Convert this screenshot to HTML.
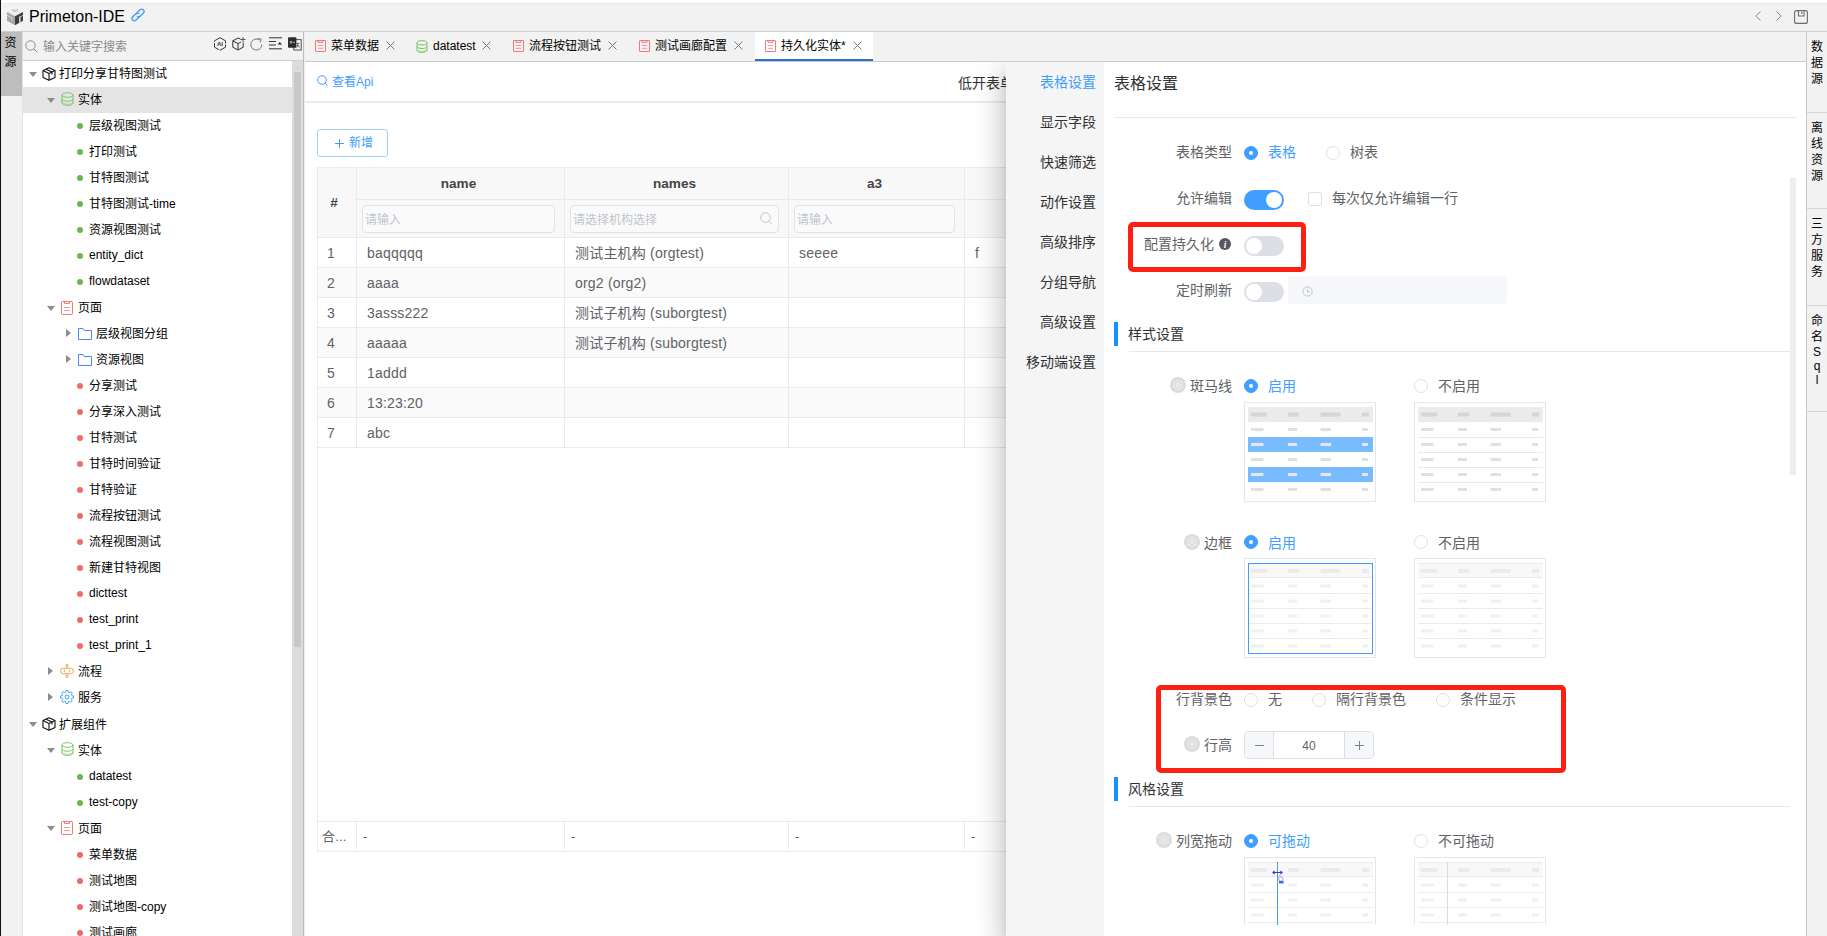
<!DOCTYPE html>
<html lang="zh-CN"><head><meta charset="utf-8"><title>Primeton-IDE</title>
<style>
*{box-sizing:border-box;margin:0;padding:0}
html,body{width:1827px;height:936px;overflow:hidden;background:#fff}
body{position:relative;font-family:"Liberation Sans", "Noto Sans CJK SC", sans-serif;font-size:12px;color:#000}
.abs{position:absolute}
svg{display:block;overflow:visible}
/* ---------- header ---------- */
#edge{left:0;top:0;width:1px;height:936px;background:#111}
#hdr{left:1px;top:3px;width:1826px;height:28px;background:#f2f2f2;border-top:1px solid #e9e9e9}
#hline{left:1px;top:31px;width:1826px;height:1px;background:#cdcdcd}
#title{left:29px;top:6px;font-size:16px;line-height:22px;color:#000;white-space:nowrap}
/* ---------- left strip ---------- */
#lstrip{left:1px;top:32px;width:22px;height:904px;background:#f2f2f2;border-right:1px solid #e2e2e2}
#ltab{left:1px;top:32px;width:21px;height:64px;background:#bdbdbd;font-size:12px;line-height:19px;text-align:center;padding-top:2px;padding-right:2px;color:#000}
/* ---------- search ---------- */
#search{left:23px;top:32px;width:280px;height:29px;background:#f2f2f2;border-bottom:1px solid #cfcfcf}
#search .ph{left:20px;top:7px;font-size:12px;line-height:16px;color:#8a8a8a}
/* ---------- tree ---------- */
#tree{left:23px;top:61px;width:269px;height:875px;background:#fff;overflow:hidden}
.row{position:absolute;left:0;width:269px;height:26px;line-height:26px;font-size:12px;white-space:nowrap;color:#000}
.row.sel{background:#e4e4e4}
.row .t{position:absolute;top:0}
.row svg{position:absolute}
.dot{position:absolute;width:6px;height:6px;border-radius:50%;top:10px}
#tscroll{left:292px;top:61px;width:11px;height:875px;background:#dcdcdc}
#tthumb{left:294px;top:72px;width:7px;height:575px;background:#c8c8c8}
#split{left:303px;top:32px;width:2px;height:904px;background:#bdbdbd;border-right:1px solid #ececec}
/* ---------- tabs ---------- */
#tabs{left:305px;top:32px;width:1501px;height:30px;background:#f2f2f2;border-bottom:1px solid #cbcbcb}
.tab{position:absolute;top:0;height:29px;font-size:12px;line-height:16px;white-space:nowrap}
.tab .tt{position:absolute;left:26px;top:5.500px}
.tab svg{position:absolute}
.tab.act{background:#fff;border-bottom:2px solid #2d6fce}
/* ---------- right strip ---------- */
#rstrip{left:1806px;top:32px;width:21px;height:904px;background:#f2f2f2;border-left:1px solid #c9c9c9}
.rs{position:absolute;left:0px;width:20px;text-align:center;font-size:12px;line-height:16px;color:#000}
.rsl{position:absolute;left:0;width:21px;height:1px;background:#d4d4d4}
/* ---------- main ---------- */
#main{left:305px;top:62px;width:1501px;height:874px;background:#fff;overflow:hidden}
#tb-line{left:0;top:39px;width:1501px;height:2px;background:#efebeb}
.lnk{color:#409eff;font-size:12px;line-height:16px;white-space:nowrap}
#addbtn{left:12px;top:67px;width:71px;height:28px;border:1px solid #a3d0fd;border-radius:3px;color:#409eff;font-size:12px;line-height:27px;background:#fff}
/* table */
.tbl{position:absolute;background:#fff}
.c{position:absolute;border-right:1px solid #e8eaec;border-bottom:1px solid #e8eaec;font-size:14px;letter-spacing:.2px;color:#606266;white-space:nowrap;overflow:hidden}
.c.h{background:#f8f8f9;color:#444;letter-spacing:0;font-weight:bold;text-align:center;font-size:13.600px;padding-right:4px}
.inp{position:absolute;height:28px;border:1px solid #e0e3ea;border-radius:4px;background:#fafafa;font-size:12px;line-height:28px;color:#c0c4cc;padding-left:2px;white-space:nowrap}
/* drawer */
#shadow{left:701px;top:0;width:800px;height:874px;background:#fff;box-shadow:0 8px 10px -5px rgba(0,0,0,.2),0 16px 24px 2px rgba(0,0,0,.14),0 6px 30px 5px rgba(0,0,0,.12)}
#menu{left:701px;top:0;width:98px;height:874px;background:#f5f5f5}
.mi{position:absolute;right:8px;font-size:14px;line-height:20px;color:#303133;white-space:nowrap}
#pane{left:799px;top:0;width:702px;height:874px;background:#fff;overflow:hidden}
.lbl{position:absolute;font-size:14px;line-height:20px;color:#606266;white-space:nowrap;text-align:right}
.txt{position:absolute;font-size:14px;line-height:20px;color:#606266;white-space:nowrap}
.blue{color:#409eff}
.radio{position:absolute;width:14px;height:14px;border-radius:50%;border:1px solid #dcdfe6;background:#fff}
.radio.on{border-color:#409eff;background:#409eff}
.radio.on:after{content:"";position:absolute;left:4px;top:4px;width:4px;height:4px;border-radius:50%;background:#fff}
.sw{position:absolute;width:40px;height:20px;border-radius:10px;background:#dcdfe6}
.sw:after{content:"";position:absolute;left:2px;top:2px;width:16px;height:16px;border-radius:50%;background:#fff}
.sw.on{background:#409eff}
.sw.on:after{left:22px}
.red{position:absolute;border:5px solid #fb2012;border-radius:5px}
.sec-bar{position:absolute;width:4px;height:24px;background:#1890ff}
.sec-t{position:absolute;font-size:14px;line-height:20px;color:#303133;white-space:nowrap}
.sec-l{position:absolute;height:1px;background:#e4e7ed}
.thumb{position:absolute;width:132px;height:100px;border:1px solid #e6e6e8;background:#fff}
.gear{position:absolute;width:16px;height:16px;border-radius:50%;background:#dcdcdc}
</style></head>
<body>
<div class="abs" id="hdr"></div><div class="abs" id="hline"></div>
<svg class="abs" style="left:7px;top:7.700px" width="16" height="17.300" viewBox="7 7.700 16 17.300"><path d="M15 7.700 L23 11.800 L15 16 L7 11.800 Z" fill="#ededed"/><path d="M7 11.800 L15 16 V25 L7 20.500 Z" fill="#a6a6a6"/><path d="M15 16 L23 11.800 V20.500 L15 25 Z" fill="#3d3d3d"/><path d="M12 9.300 L15 10.900 L18 9.300" fill="none" stroke="#9c9c9c" stroke-width=".8"/><path d="M7 15.400 L11.600 17.800 V20.200 L12.300 20.600 V17.300 L7 14.600 Z" fill="#e6e6e6"/><path d="M19 16.800 L20.500 16 V21.900 L19 22.700 Z" fill="#dadada"/><path d="M23 14.600 L19 16.700 V17.600 L23 15.500 Z" fill="#dadada"/></svg>
<div class="abs" id="title">Primeton-IDE</div>
<svg class="abs" style="left:130px;top:6.500px" width="16" height="16" viewBox="0 0 16 16" fill="none" stroke="#409eff" stroke-width="1.3" stroke-linecap="round"><g transform="rotate(-43 8 8)"><path d="M8.2 10.300 H2.900 A2.300 2.300 0 0 1 2.900 5.700 H7.300 A2.300 2.300 0 0 1 9.500 7.400"/><path d="M7.800 5.700 H13.100 A2.300 2.300 0 0 1 13.100 10.300 H8.700 A2.300 2.300 0 0 1 6.500 8.600"/></g></svg>
<svg class="abs" style="left:1755px;top:11px" width="6" height="10" viewBox="0 0 6 10" fill="none" stroke="#8a8a8a" stroke-width="1"><path d="M5.5 0.5 L0.8 5 L5.5 9.5"/></svg>
<svg class="abs" style="left:1776px;top:11px" width="6" height="10" viewBox="0 0 6 10" fill="none" stroke="#8a8a8a" stroke-width="1"><path d="M0.5 0.5 L5.2 5 L0.5 9.5"/></svg>
<svg class="abs" style="left:1794px;top:10px" width="14" height="14" viewBox="0 0 14 14" fill="none" stroke="#6b6b6b" stroke-width="1.1"><rect x="0.6" y="0.6" width="12.8" height="12.8" rx="2"/><path d="M4.5 0.6 V6 H10 V0.6"/><rect x="7" y="2.2" width="1.4" height="1.6" fill="#6b6b6b" stroke="none"/></svg>
<div class="abs" id="lstrip"></div><div class="abs" id="ltab">资<br>源</div>
<div class="abs" id="search">
<svg class="abs" style="left:2px;top:8px" width="13" height="13" viewBox="0 0 13 13" fill="none" stroke="#8c8c8c" stroke-width="1"><circle cx="5.5" cy="5.5" r="4.7"/><path d="M9 9 L12.5 12.5"/></svg>
<div class="abs ph">输入关键字搜索</div>
<svg class="abs" style="left:190px;top:5px" width="14" height="14" viewBox="0 0 14 14" fill="none" stroke="#333" stroke-width="1"><path d="M7 0.7 L12.5 3.8 V10.2 L7 13.3 L1.5 10.2 V3.8 Z" stroke-dasharray="9 1.2"/><text x="7" y="9.3" font-size="6" font-weight="bold" text-anchor="middle" fill="#333" stroke="none" font-family="Liberation Sans, sans-serif">AI</text></svg>
<svg class="abs" style="left:209px;top:5px" width="14" height="14" viewBox="0 0 14 14" fill="none" stroke="#333" stroke-width="1"><path d="M8.5 2 L6 1 L0.8 3.8 V10.2 L6 13 L11.2 10.2 V5.5"/><path d="M0.8 3.8 L6 6.6 L9 5 M6 6.6 V13"/><path d="M11 0 V5 M8.5 2.5 H13.5" stroke="#555"/></svg>
<svg class="abs" style="left:227px;top:6px" width="13" height="13" viewBox="0 0 13 13" fill="none" stroke="#777" stroke-width="1"><path d="M11.8 6.5 A5.5 5.5 0 1 1 9.3 1.9"/><path d="M7.5 0.6 L11.2 1 L10.2 4.4" /></svg>
<svg class="abs" style="left:246px;top:5px" width="14" height="13" viewBox="0 0 14 13" fill="none" stroke="#333" stroke-width="1"><path d="M0 0.8 H13 M0 4.5 H7 M0 8 H7 M0 11.8 H13"/><path d="M8.6 7.6 H13 L10.8 5 Z" fill="#222" stroke="none"/></svg>
<svg class="abs" style="left:265px;top:5px" width="14" height="14" viewBox="0 0 14 14" fill="none"><rect x="5.8" y="2.6" width="7.4" height="10.4" stroke="#555" stroke-width="1"/><rect x="0" y="0.2" width="8.4" height="10.6" rx="1" fill="#2b2b2b"/><path d="M1.6 5 H4.4 M3 4 V6.8 M5 5.4 H6.8" stroke="#ddd" stroke-width=".8"/><path d="M8.4 6.4 H11.4 M10 6.4 L9 10.4 M10 8 L11.4 10.4" stroke="#444" stroke-width=".8"/></svg>
</div>
<div class="abs" id="tree">
<div class="row" style="top:0px"><svg style="left:6px;top:11px" width="8" height="5" viewBox="0 0 8 5"><path d="M0 0 H8 L4 5 Z" fill="#8c8c8c"/></svg><svg style="left:19px;top:6px" width="14" height="14" viewBox="0 0 14 14" fill="none" stroke="#111" stroke-width="1.1" stroke-linejoin="round"><path d="M7 0.8 L13 3.6 V10.4 L7 13.2 L1 10.4 V3.6 Z"/><path d="M1 3.6 L7 6.4 L13 3.6 M7 6.4 V13.2 M4 2.2 L10 5 V7.4"/></svg><span class="t" style="left:36px;top:0px">打印分享甘特图测试</span></div>
<div class="row sel" style="top:26px"><svg style="left:24px;top:11px" width="8" height="5" viewBox="0 0 8 5"><path d="M0 0 H8 L4 5 Z" fill="#8c8c8c"/></svg><svg style="left:38px;top:5px" width="13" height="14" viewBox="0 0 13 14" fill="none" stroke="#7cc45f" stroke-width="1"><ellipse cx="6.5" cy="3" rx="5.5" ry="2.3"/><path d="M1 3 V11 C1 12.4 3.4 13.4 6.5 13.4 C9.6 13.4 12 12.4 12 11 V3"/><path d="M1 7 C1 8.3 3.4 9.2 6.5 9.2 C9.6 9.2 12 8.3 12 7"/><path d="M1 10 C1 11.3 3.4 12.2 6.5 12.2 C9.6 12.2 12 11.3 12 10" stroke-opacity=".6"/></svg><span class="t" style="left:55px;top:0px">实体</span></div>
<div class="row" style="top:52px"><span class="dot" style="left:54px;top:10px;background:#6cb650"></span><span class="t" style="left:66px;top:0px">层级视图测试</span></div>
<div class="row" style="top:78px"><span class="dot" style="left:54px;top:10px;background:#6cb650"></span><span class="t" style="left:66px;top:0px">打印测试</span></div>
<div class="row" style="top:104px"><span class="dot" style="left:54px;top:10px;background:#6cb650"></span><span class="t" style="left:66px;top:0px">甘特图测试</span></div>
<div class="row" style="top:130px"><span class="dot" style="left:54px;top:10px;background:#6cb650"></span><span class="t" style="left:66px;top:0px">甘特图测试-time</span></div>
<div class="row" style="top:156px"><span class="dot" style="left:54px;top:10px;background:#6cb650"></span><span class="t" style="left:66px;top:0px">资源视图测试</span></div>
<div class="row" style="top:182px"><span class="dot" style="left:54px;top:10px;background:#6cb650"></span><span class="t" style="left:66px;top:-1px">entity_dict</span></div>
<div class="row" style="top:208px"><span class="dot" style="left:54px;top:10px;background:#6cb650"></span><span class="t" style="left:66px;top:-1px">flowdataset</span></div>
<div class="row" style="top:234px"><svg style="left:24px;top:11px" width="8" height="5" viewBox="0 0 8 5"><path d="M0 0 H8 L4 5 Z" fill="#8c8c8c"/></svg><svg style="left:38px;top:5.5px" width="12" height="14" viewBox="0 0 12 14" fill="none" stroke="#f17878" stroke-width="1"><rect x="0.5" y="0.5" width="11" height="13" rx="0.8"/><path d="M3.5 0.5 V2.5 H8.5 V0.5"/><path d="M3 6.5 H9 M3 9.5 H9" stroke-opacity=".75"/></svg><span class="t" style="left:55px;top:0px">页面</span></div>
<div class="row" style="top:260px"><svg style="left:43px;top:8px" width="5" height="8" viewBox="0 0 5 8"><path d="M0 0 V8 L5 4 Z" fill="#8c8c8c"/></svg><svg style="left:55px;top:6.5px" width="14" height="12" viewBox="0 0 14 12" fill="none" stroke="#4a86f5" stroke-width="1"><path d="M0.5 11.5 V0.5 H5 L6.2 2.5 H13.5 V11.5 Z"/></svg><span class="t" style="left:73px;top:0px">层级视图分组</span></div>
<div class="row" style="top:286px"><svg style="left:43px;top:8px" width="5" height="8" viewBox="0 0 5 8"><path d="M0 0 V8 L5 4 Z" fill="#8c8c8c"/></svg><svg style="left:55px;top:6.5px" width="14" height="12" viewBox="0 0 14 12" fill="none" stroke="#4a86f5" stroke-width="1"><path d="M0.5 11.5 V0.5 H5 L6.2 2.5 H13.5 V11.5 Z"/></svg><span class="t" style="left:73px;top:0px">资源视图</span></div>
<div class="row" style="top:312px"><span class="dot" style="left:54px;top:10px;background:#f16a6a"></span><span class="t" style="left:66px;top:0px">分享测试</span></div>
<div class="row" style="top:338px"><span class="dot" style="left:54px;top:10px;background:#f16a6a"></span><span class="t" style="left:66px;top:0px">分享深入测试</span></div>
<div class="row" style="top:364px"><span class="dot" style="left:54px;top:10px;background:#f16a6a"></span><span class="t" style="left:66px;top:0px">甘特测试</span></div>
<div class="row" style="top:390px"><span class="dot" style="left:54px;top:10px;background:#f16a6a"></span><span class="t" style="left:66px;top:0px">甘特时间验证</span></div>
<div class="row" style="top:416px"><span class="dot" style="left:54px;top:10px;background:#f16a6a"></span><span class="t" style="left:66px;top:0px">甘特验证</span></div>
<div class="row" style="top:442px"><span class="dot" style="left:54px;top:10px;background:#f16a6a"></span><span class="t" style="left:66px;top:0px">流程按钮测试</span></div>
<div class="row" style="top:468px"><span class="dot" style="left:54px;top:10px;background:#f16a6a"></span><span class="t" style="left:66px;top:0px">流程视图测试</span></div>
<div class="row" style="top:494px"><span class="dot" style="left:54px;top:10px;background:#f16a6a"></span><span class="t" style="left:66px;top:0px">新建甘特视图</span></div>
<div class="row" style="top:520px"><span class="dot" style="left:54px;top:10px;background:#f16a6a"></span><span class="t" style="left:66px;top:-1px">dicttest</span></div>
<div class="row" style="top:546px"><span class="dot" style="left:54px;top:10px;background:#f16a6a"></span><span class="t" style="left:66px;top:-1px">test_print</span></div>
<div class="row" style="top:572px"><span class="dot" style="left:54px;top:10px;background:#f16a6a"></span><span class="t" style="left:66px;top:-1px">test_print_1</span></div>
<div class="row" style="top:598px"><svg style="left:25px;top:8px" width="5" height="8" viewBox="0 0 5 8"><path d="M0 0 V8 L5 4 Z" fill="#8c8c8c"/></svg><svg style="left:37px;top:5px" width="14" height="14" viewBox="0 0 14 14" fill="none" stroke="#e9a754" stroke-width="1"><rect x="0.6" y="4.2" width="12.8" height="5.600" rx="2.800"/><path d="M4.300 5.600 V8.400 M9.700 5.600 V8.400"/><ellipse cx="7" cy="1.500" rx="1.300" ry="1"/><ellipse cx="7" cy="12.500" rx="1.300" ry="1"/><path d="M7 2.500 V4.200 M7 9.800 V11.500"/></svg><span class="t" style="left:55px;top:0px">流程</span></div>
<div class="row" style="top:624px"><svg style="left:25px;top:8px" width="5" height="8" viewBox="0 0 5 8"><path d="M0 0 V8 L5 4 Z" fill="#8c8c8c"/></svg><svg style="left:37px;top:4.7px" width="14" height="14" viewBox="0 0 14 14" fill="none" stroke="#409eff" stroke-width="1" stroke-linejoin="round"><circle cx="7" cy="7" r="1.900"/><path d="M5.69 2.17 L5.97 0.48 L8.03 0.48 L8.31 2.17 L9.49 2.66 L10.88 1.66 L12.34 3.12 L11.34 4.51 L11.83 5.69 L13.52 5.97 L13.52 8.03 L11.83 8.31 L11.34 9.49 L12.34 10.88 L10.88 12.34 L9.49 11.34 L8.31 11.83 L8.03 13.52 L5.97 13.52 L5.69 11.83 L4.51 11.34 L3.12 12.34 L1.66 10.88 L2.66 9.49 L2.17 8.31 L0.48 8.03 L0.48 5.97 L2.17 5.69 L2.66 4.51 L1.66 3.12 L3.12 1.66 L4.51 2.66 Z"/></svg><span class="t" style="left:55px;top:0px">服务</span></div>
<div class="row" style="top:650px"><svg style="left:6px;top:11px" width="8" height="5" viewBox="0 0 8 5"><path d="M0 0 H8 L4 5 Z" fill="#8c8c8c"/></svg><svg style="left:19px;top:6px" width="14" height="14" viewBox="0 0 14 14" fill="none" stroke="#111" stroke-width="1.1" stroke-linejoin="round"><path d="M7 0.8 L13 3.6 V10.4 L7 13.2 L1 10.4 V3.6 Z"/><path d="M1 3.6 L7 6.4 L13 3.6 M7 6.4 V13.2 M4 2.2 L10 5 V7.4"/></svg><span class="t" style="left:36px;top:1px">扩展组件</span></div>
<div class="row" style="top:676px"><svg style="left:24px;top:11px" width="8" height="5" viewBox="0 0 8 5"><path d="M0 0 H8 L4 5 Z" fill="#8c8c8c"/></svg><svg style="left:38px;top:5px" width="13" height="14" viewBox="0 0 13 14" fill="none" stroke="#7cc45f" stroke-width="1"><ellipse cx="6.5" cy="3" rx="5.5" ry="2.3"/><path d="M1 3 V11 C1 12.4 3.4 13.4 6.5 13.4 C9.6 13.4 12 12.4 12 11 V3"/><path d="M1 7 C1 8.3 3.4 9.2 6.5 9.2 C9.6 9.2 12 8.3 12 7"/><path d="M1 10 C1 11.3 3.4 12.2 6.5 12.2 C9.6 12.2 12 11.3 12 10" stroke-opacity=".6"/></svg><span class="t" style="left:55px;top:1px">实体</span></div>
<div class="row" style="top:702px"><span class="dot" style="left:54px;top:11px;background:#6cb650"></span><span class="t" style="left:66px;top:0px">datatest</span></div>
<div class="row" style="top:728px"><span class="dot" style="left:54px;top:11px;background:#6cb650"></span><span class="t" style="left:66px;top:0px">test-copy</span></div>
<div class="row" style="top:754px"><svg style="left:24px;top:11px" width="8" height="5" viewBox="0 0 8 5"><path d="M0 0 H8 L4 5 Z" fill="#8c8c8c"/></svg><svg style="left:38px;top:5.5px" width="12" height="14" viewBox="0 0 12 14" fill="none" stroke="#f17878" stroke-width="1"><rect x="0.5" y="0.5" width="11" height="13" rx="0.8"/><path d="M3.5 0.5 V2.5 H8.5 V0.5"/><path d="M3 6.5 H9 M3 9.5 H9" stroke-opacity=".75"/></svg><span class="t" style="left:55px;top:1px">页面</span></div>
<div class="row" style="top:780px"><span class="dot" style="left:54px;top:11px;background:#f16a6a"></span><span class="t" style="left:66px;top:1px">菜单数据</span></div>
<div class="row" style="top:806px"><span class="dot" style="left:54px;top:11px;background:#f16a6a"></span><span class="t" style="left:66px;top:1px">测试地图</span></div>
<div class="row" style="top:832px"><span class="dot" style="left:54px;top:11px;background:#f16a6a"></span><span class="t" style="left:66px;top:1px">测试地图-copy</span></div>
<div class="row" style="top:858px"><span class="dot" style="left:54px;top:11px;background:#f16a6a"></span><span class="t" style="left:66px;top:1px">测试画廊</span></div>
</div>
<div class="abs" id="tscroll"></div><div class="abs" id="tthumb"></div>
<svg class="abs" style="left:294px;top:65px" width="7" height="4" viewBox="0 0 7 4"><path d="M0 4 H7 L3.5 0 Z" fill="#d6d6d6"/></svg>
<div class="abs" id="split"></div>
<div class="abs" id="tabs">
<div class="tab" style="left:0px;width:101px"><svg style="left:10px;top:8px" width="11" height="12" viewBox="0 0 11 12" fill="none" stroke="#f17878" stroke-width="1"><rect x="0.5" y="0.5" width="10" height="11" rx="0.5"/><path d="M3 0.5 V2.300 H8 V0.5"/><path d="M2.800 5.500 H8.200 M2.800 8.300 H8.200" stroke-opacity=".7"/></svg><span class="tt">菜单数据</span><svg style="left:81px;top:9px" width="9" height="9" viewBox="0 0 9 9" stroke="#777" stroke-width="1" fill="none"><path d="M0.5 0.5 L8.5 8.5 M8.5 0.5 L0.5 8.5"/></svg></div>
<div class="tab" style="left:102px;width:95px"><svg style="left:9px;top:8px" width="12" height="13" viewBox="0 0 12 13" fill="none" stroke="#7cc45f" stroke-width="1"><ellipse cx="6" cy="2.800" rx="5" ry="2.100"/><path d="M1 2.800 V10.200 C1 11.500 3.200 12.400 6 12.400 C8.800 12.400 11 11.500 11 10.200 V2.800"/><path d="M1 6.400 C1 7.600 3.200 8.500 6 8.500 C8.800 8.500 11 7.600 11 6.400"/><path d="M1 9.200 C1 10.400 3.200 11.300 6 11.300 C8.800 11.300 11 10.400 11 9.200" stroke-opacity=".6"/></svg><span class="tt">datatest</span><svg style="left:75px;top:9px" width="9" height="9" viewBox="0 0 9 9" stroke="#777" stroke-width="1" fill="none"><path d="M0.5 0.5 L8.5 8.5 M8.5 0.5 L0.5 8.5"/></svg></div>
<div class="tab" style="left:198px;width:125px"><svg style="left:10px;top:8px" width="11" height="12" viewBox="0 0 11 12" fill="none" stroke="#f17878" stroke-width="1"><rect x="0.5" y="0.5" width="10" height="11" rx="0.5"/><path d="M3 0.5 V2.300 H8 V0.5"/><path d="M2.800 5.500 H8.200 M2.800 8.300 H8.200" stroke-opacity=".7"/></svg><span class="tt">流程按钮测试</span><svg style="left:105px;top:9px" width="9" height="9" viewBox="0 0 9 9" stroke="#777" stroke-width="1" fill="none"><path d="M0.5 0.5 L8.5 8.5 M8.5 0.5 L0.5 8.5"/></svg></div>
<div class="tab" style="left:324px;width:125px"><svg style="left:10px;top:8px" width="11" height="12" viewBox="0 0 11 12" fill="none" stroke="#f17878" stroke-width="1"><rect x="0.5" y="0.5" width="10" height="11" rx="0.5"/><path d="M3 0.5 V2.300 H8 V0.5"/><path d="M2.800 5.500 H8.200 M2.800 8.300 H8.200" stroke-opacity=".7"/></svg><span class="tt">测试画廊配置</span><svg style="left:105px;top:9px" width="9" height="9" viewBox="0 0 9 9" stroke="#777" stroke-width="1" fill="none"><path d="M0.5 0.5 L8.5 8.5 M8.5 0.5 L0.5 8.5"/></svg></div>
<div class="tab act" style="left:450px;width:118px"><svg style="left:10px;top:8px" width="11" height="12" viewBox="0 0 11 12" fill="none" stroke="#f17878" stroke-width="1"><rect x="0.5" y="0.5" width="10" height="11" rx="0.5"/><path d="M3 0.5 V2.300 H8 V0.5"/><path d="M2.800 5.500 H8.200 M2.800 8.300 H8.200" stroke-opacity=".7"/></svg><span class="tt">持久化实体*</span><svg style="left:98px;top:9px" width="9" height="9" viewBox="0 0 9 9" stroke="#777" stroke-width="1" fill="none"><path d="M0.5 0.5 L8.5 8.5 M8.5 0.5 L0.5 8.5"/></svg></div>
</div>
<div class="abs" id="rstrip">
<div class="rs" style="top:7px;height:16px;line-height:16px">数</div><div class="rs" style="top:23px;height:16px;line-height:16px">据</div><div class="rs" style="top:39px;height:16px;line-height:16px">源</div>
<div class="rsl" style="top:80px"></div>
<div class="rs" style="top:88px;height:16px;line-height:16px">离</div><div class="rs" style="top:104px;height:16px;line-height:16px">线</div><div class="rs" style="top:120px;height:16px;line-height:16px">资</div><div class="rs" style="top:136px;height:16px;line-height:16px">源</div>
<div class="rsl" style="top:176px"></div>
<div class="rs" style="top:184px;height:16px;line-height:16px">三</div><div class="rs" style="top:200px;height:16px;line-height:16px">方</div><div class="rs" style="top:216px;height:16px;line-height:16px">服</div><div class="rs" style="top:232px;height:16px;line-height:16px">务</div>
<div class="rsl" style="top:273px"></div>
<div class="rs" style="top:281px;height:16px;line-height:16px">命</div><div class="rs" style="top:297px;height:16px;line-height:16px">名</div><div class="rs" style="top:313px;height:14px;line-height:14px">S</div><div class="rs" style="top:327px;height:14px;line-height:14px">q</div><div class="rs" style="top:341px;height:14px;line-height:14px">l</div>
<div class="rsl" style="top:379px"></div>
</div>
<div class="abs" id="main">
<svg class="abs" style="left:12px;top:13px" width="11" height="11" viewBox="0 0 11 11" fill="none" stroke="#409eff" stroke-width="1"><circle cx="5" cy="5" r="4.3"/><path d="M8 8 L10.5 10.5"/></svg>
<div class="abs lnk" style="left:27px;top:12px">查看Api</div>
<div class="abs" style="left:653px;top:11px;font-size:14px;line-height:20px;color:#333;white-space:nowrap">低开表单</div>
<div class="abs" id="tb-line"></div>
<div class="abs" id="addbtn"><svg style="position:absolute;left:17px;top:8.500px" width="9" height="9" viewBox="0 0 9 9" stroke="#409eff" stroke-width="1" fill="none"><path d="M4.500 0 V9 M0 4.500 H9"/></svg><span style="position:absolute;left:31px;top:0">新增</span></div>
<div class="abs" style="left:12px;top:105px;width:720px;height:685px;border-left:1px solid #e8eaec;border-top:1px solid #e8eaec"></div>
<div class="c h" style="left:13px;top:106px;width:39px;height:70px;line-height:69px;padding-right:6px">#</div>
<div class="c h" style="left:52px;top:106px;width:208px;height:32px;line-height:31px">name</div>
<div class="c h" style="left:52px;top:138px;width:208px;height:38px"></div>
<div class="c h" style="left:260px;top:106px;width:224px;height:32px;line-height:31px">names</div>
<div class="c h" style="left:260px;top:138px;width:224px;height:38px"></div>
<div class="c h" style="left:484px;top:106px;width:176px;height:32px;line-height:31px">a3</div>
<div class="c h" style="left:484px;top:138px;width:176px;height:38px"></div>
<div class="c h" style="left:660px;top:106px;width:200px;height:32px;line-height:31px"></div>
<div class="c h" style="left:660px;top:138px;width:200px;height:38px"></div>
<div class="inp" style="left:57px;top:143px;width:193px">请输入</div>
<div class="inp" style="left:265px;top:143px;width:209px">请选择机构选择</div>
<svg class="abs" style="left:455px;top:150px" width="13" height="13" viewBox="0 0 13 13" fill="none" stroke="#c0c4cc" stroke-width="1"><circle cx="5.5" cy="5.5" r="4.8"/><path d="M9 9 L12 12"/></svg>
<div class="inp" style="left:489px;top:143px;width:161px">请输入</div>
<div class="c" style="left:13px;top:176px;width:39px;height:30px;line-height:31px;padding-left:9px;background:#fff">1</div>
<div class="c" style="left:52px;top:176px;width:208px;height:30px;line-height:31px;padding-left:10px;background:#fff">baqqqqq</div>
<div class="c" style="left:260px;top:176px;width:224px;height:30px;line-height:31px;padding-left:10px;background:#fff">测试主机构 (orgtest)</div>
<div class="c" style="left:484px;top:176px;width:176px;height:30px;line-height:31px;padding-left:10px;background:#fff">seeee</div>
<div class="c" style="left:660px;top:176px;width:200px;height:30px;line-height:31px;padding-left:10px;background:#fff">f</div>
<div class="c" style="left:13px;top:206px;width:39px;height:30px;line-height:31px;padding-left:9px;background:#fafafa">2</div>
<div class="c" style="left:52px;top:206px;width:208px;height:30px;line-height:31px;padding-left:10px;background:#fafafa">aaaa</div>
<div class="c" style="left:260px;top:206px;width:224px;height:30px;line-height:31px;padding-left:10px;background:#fafafa">org2 (org2)</div>
<div class="c" style="left:484px;top:206px;width:176px;height:30px;line-height:31px;padding-left:10px;background:#fafafa"></div>
<div class="c" style="left:660px;top:206px;width:200px;height:30px;line-height:31px;padding-left:10px;background:#fafafa"></div>
<div class="c" style="left:13px;top:236px;width:39px;height:30px;line-height:31px;padding-left:9px;background:#fff">3</div>
<div class="c" style="left:52px;top:236px;width:208px;height:30px;line-height:31px;padding-left:10px;background:#fff">3asss222</div>
<div class="c" style="left:260px;top:236px;width:224px;height:30px;line-height:31px;padding-left:10px;background:#fff">测试子机构 (suborgtest)</div>
<div class="c" style="left:484px;top:236px;width:176px;height:30px;line-height:31px;padding-left:10px;background:#fff"></div>
<div class="c" style="left:660px;top:236px;width:200px;height:30px;line-height:31px;padding-left:10px;background:#fff"></div>
<div class="c" style="left:13px;top:266px;width:39px;height:30px;line-height:31px;padding-left:9px;background:#fafafa">4</div>
<div class="c" style="left:52px;top:266px;width:208px;height:30px;line-height:31px;padding-left:10px;background:#fafafa">aaaaa</div>
<div class="c" style="left:260px;top:266px;width:224px;height:30px;line-height:31px;padding-left:10px;background:#fafafa">测试子机构 (suborgtest)</div>
<div class="c" style="left:484px;top:266px;width:176px;height:30px;line-height:31px;padding-left:10px;background:#fafafa"></div>
<div class="c" style="left:660px;top:266px;width:200px;height:30px;line-height:31px;padding-left:10px;background:#fafafa"></div>
<div class="c" style="left:13px;top:296px;width:39px;height:30px;line-height:31px;padding-left:9px;background:#fff">5</div>
<div class="c" style="left:52px;top:296px;width:208px;height:30px;line-height:31px;padding-left:10px;background:#fff">1addd</div>
<div class="c" style="left:260px;top:296px;width:224px;height:30px;line-height:31px;padding-left:10px;background:#fff"></div>
<div class="c" style="left:484px;top:296px;width:176px;height:30px;line-height:31px;padding-left:10px;background:#fff"></div>
<div class="c" style="left:660px;top:296px;width:200px;height:30px;line-height:31px;padding-left:10px;background:#fff"></div>
<div class="c" style="left:13px;top:326px;width:39px;height:30px;line-height:31px;padding-left:9px;background:#fafafa">6</div>
<div class="c" style="left:52px;top:326px;width:208px;height:30px;line-height:31px;padding-left:10px;background:#fafafa">13:23:20</div>
<div class="c" style="left:260px;top:326px;width:224px;height:30px;line-height:31px;padding-left:10px;background:#fafafa"></div>
<div class="c" style="left:484px;top:326px;width:176px;height:30px;line-height:31px;padding-left:10px;background:#fafafa"></div>
<div class="c" style="left:660px;top:326px;width:200px;height:30px;line-height:31px;padding-left:10px;background:#fafafa"></div>
<div class="c" style="left:13px;top:356px;width:39px;height:30px;line-height:31px;padding-left:9px;background:#fff">7</div>
<div class="c" style="left:52px;top:356px;width:208px;height:30px;line-height:31px;padding-left:10px;background:#fff">abc</div>
<div class="c" style="left:260px;top:356px;width:224px;height:30px;line-height:31px;padding-left:10px;background:#fff"></div>
<div class="c" style="left:484px;top:356px;width:176px;height:30px;line-height:31px;padding-left:10px;background:#fff"></div>
<div class="c" style="left:660px;top:356px;width:200px;height:30px;line-height:31px;padding-left:10px;background:#fff"></div>
<div class="abs" style="left:13px;top:759px;width:720px;height:1px;background:#e8eaec"></div>
<div class="c" style="left:13px;top:760px;width:39px;height:30px;line-height:29px;padding-left:4px;font-size:13px">合...</div>
<div class="c" style="left:52px;top:760px;width:208px;height:30px;line-height:29px;padding-left:6px;font-size:13px">-</div>
<div class="c" style="left:260px;top:760px;width:224px;height:30px;line-height:29px;padding-left:6px;font-size:13px">-</div>
<div class="c" style="left:484px;top:760px;width:176px;height:30px;line-height:29px;padding-left:6px;font-size:13px">-</div>
<div class="c" style="left:660px;top:760px;width:200px;height:30px;line-height:29px;padding-left:6px;font-size:13px">-</div>
<div class="abs" id="shadow"></div>
<div class="abs" id="menu">
<div class="mi blue" style="top:10px">表格设置</div>
<div class="mi" style="top:50px">显示字段</div>
<div class="mi" style="top:90px">快速筛选</div>
<div class="mi" style="top:130px">动作设置</div>
<div class="mi" style="top:170px">高级排序</div>
<div class="mi" style="top:210px">分组导航</div>
<div class="mi" style="top:250px">高级设置</div>
<div class="mi" style="top:290px">移动端设置</div>
</div>
<div class="abs" id="pane">
<div class="abs" style="left:10px;top:11px;font-size:16px;line-height:22px;color:#303133;white-space:nowrap">表格设置</div>
<div class="abs" style="left:10px;top:55px;width:682px;height:1px;background:#e4e7ed"></div>
<div class="abs" style="left:686px;top:116px;width:6px;height:297px;background:#ededed"></div>
<div class="lbl" style="right:574px;top:80px">表格类型</div>
<div class="radio on" style="left:140px;top:84px"></div>
<div class="txt blue" style="left:164px;top:80px">表格</div>
<div class="radio" style="left:222px;top:84px"></div>
<div class="txt" style="left:246px;top:80px">树表</div>
<div class="lbl" style="right:574px;top:126px">允许编辑</div>
<div class="sw on" style="left:140px;top:128px"></div>
<div class="abs" style="left:204px;top:130px;width:14px;height:14px;border:1px solid #dcdfe6;border-radius:2px;background:#fff"></div>
<div class="txt" style="left:228px;top:126px">每次仅允许编辑一行</div>
<div class="red" style="left:23.700000000000045px;top:160.2px;width:178.400px;height:50.300px"></div>
<div class="lbl" style="right:592px;top:172px">配置持久化</div>
<svg class="abs" style="left:115px;top:176px" width="12" height="12" viewBox="0 0 12 12"><circle cx="6" cy="6" r="6" fill="#55585e"/><text x="6" y="9.6" font-size="9.5" font-weight="bold" font-style="italic" text-anchor="middle" fill="#fff" font-family="Liberation Serif, serif">i</text></svg>
<div class="sw" style="left:140px;top:174px"></div>
<div class="lbl" style="right:574px;top:218px">定时刷新</div>
<div class="sw" style="left:140px;top:220px"></div>
<div class="abs" style="left:184px;top:214px;width:219px;height:28px;background:#f5f7fa;border-radius:4px"></div>
<svg class="abs" style="left:198px;top:224px" width="11" height="11" viewBox="0 0 11 11" fill="none" stroke="#c0c4cc" stroke-width="1"><circle cx="5.5" cy="5.5" r="4.6"/><path d="M5.5 2.8 V5.8 H8"/></svg>
<div class="sec-bar" style="left:10px;top:260px"></div><div class="sec-t" style="left:24px;top:262px">样式设置</div><div class="sec-l" style="left:25px;top:289px;width:661px"></div>
<div class="gear" style="left:66px;top:315px"><svg style="position:absolute;left:3px;top:3px" width="10" height="10" viewBox="0 0 10 10" fill="none" stroke="#f7f7f7" stroke-width="1"><path d="M5.00 0.15 L5.42 0.26 L5.79 0.54 L6.09 0.94 L6.33 1.36 L6.54 1.70 L6.78 1.93 L7.09 2.02 L7.49 2.03 L7.97 2.03 L8.47 2.09 L8.90 2.27 L9.20 2.57 L9.32 2.99 L9.25 3.45 L9.06 3.91 L8.82 4.33 L8.62 4.68 L8.55 5.00 L8.62 5.32 L8.82 5.67 L9.06 6.09 L9.25 6.55 L9.32 7.01 L9.20 7.42 L8.90 7.73 L8.47 7.91 L7.97 7.97 L7.49 7.97 L7.09 7.98 L6.78 8.07 L6.54 8.30 L6.33 8.64 L6.09 9.06 L5.79 9.46 L5.42 9.74 L5.00 9.85 L4.58 9.74 L4.21 9.46 L3.91 9.06 L3.67 8.64 L3.46 8.30 L3.22 8.07 L2.91 7.98 L2.51 7.97 L2.03 7.97 L1.53 7.91 L1.10 7.73 L0.80 7.43 L0.68 7.01 L0.75 6.55 L0.94 6.09 L1.18 5.67 L1.38 5.32 L1.45 5.00 L1.38 4.68 L1.18 4.33 L0.94 3.91 L0.75 3.45 L0.68 2.99 L0.80 2.58 L1.10 2.27 L1.53 2.09 L2.03 2.03 L2.51 2.03 L2.91 2.02 L3.23 1.93 L3.46 1.70 L3.67 1.36 L3.91 0.94 L4.21 0.54 L4.58 0.26 Z"/><circle cx="5" cy="5" r="1.600"/></svg></div>
<div class="lbl" style="right:574px;top:314px">斑马线</div>
<div class="radio on" style="left:140px;top:317px"></div>
<div class="txt blue" style="left:164px;top:314px">启用</div>
<div class="radio" style="left:310px;top:317px"></div>
<div class="txt" style="left:334px;top:314px">不启用</div>
<div class="thumb" style="left:140px;top:340px;height:100px"><svg width="130" height="98" viewBox="1 1 130 98"><rect x="4" y="5" width="125" height="15" fill="#ebebeb"/><rect x="7" y="10.5" width="16" height="4" fill="#d6d6d6"/><rect x="44" y="10.5" width="11" height="4" fill="#d6d6d6"/><rect x="76.5" y="10.5" width="20" height="4" fill="#d6d6d6"/><rect x="118" y="10.5" width="7" height="4" fill="#d6d6d6"/><rect x="7" y="26" width="12.5" height="3" fill="#e0e0e0"/><rect x="44" y="26" width="9" height="3" fill="#e0e0e0"/><rect x="76.5" y="26" width="10.5" height="3" fill="#e0e0e0"/><rect x="118" y="26" width="6" height="3" fill="#e0e0e0"/><rect x="4" y="35" width="125" height="15" fill="#79bbff"/><rect x="7" y="41" width="12.5" height="3" fill="#e6e6e6"/><rect x="44" y="41" width="9" height="3" fill="#e6e6e6"/><rect x="76.5" y="41" width="10.5" height="3" fill="#e6e6e6"/><rect x="118" y="41" width="6" height="3" fill="#e6e6e6"/><rect x="7" y="56" width="12.5" height="3" fill="#e0e0e0"/><rect x="44" y="56" width="9" height="3" fill="#e0e0e0"/><rect x="76.5" y="56" width="10.5" height="3" fill="#e0e0e0"/><rect x="118" y="56" width="6" height="3" fill="#e0e0e0"/><rect x="4" y="65" width="125" height="15" fill="#79bbff"/><rect x="7" y="71" width="12.5" height="3" fill="#e6e6e6"/><rect x="44" y="71" width="9" height="3" fill="#e6e6e6"/><rect x="76.5" y="71" width="10.5" height="3" fill="#e6e6e6"/><rect x="118" y="71" width="6" height="3" fill="#e6e6e6"/><rect x="7" y="86" width="12.5" height="3" fill="#e0e0e0"/><rect x="44" y="86" width="9" height="3" fill="#e0e0e0"/><rect x="76.5" y="86" width="10.5" height="3" fill="#e0e0e0"/><rect x="118" y="86" width="6" height="3" fill="#e0e0e0"/></svg></div>
<div class="thumb" style="left:310px;top:340px;height:100px"><svg width="130" height="98" viewBox="1 1 130 98"><rect x="4" y="5" width="125" height="15" fill="#ebebeb"/><rect x="7" y="10.5" width="16" height="4" fill="#d6d6d6"/><rect x="44" y="10.5" width="11" height="4" fill="#d6d6d6"/><rect x="76.5" y="10.5" width="20" height="4" fill="#d6d6d6"/><rect x="118" y="10.5" width="7" height="4" fill="#d6d6d6"/><rect x="7" y="26" width="12.5" height="3" fill="#e0e0e0"/><rect x="44" y="26" width="9" height="3" fill="#e0e0e0"/><rect x="76.5" y="26" width="10.5" height="3" fill="#e0e0e0"/><rect x="118" y="26" width="6" height="3" fill="#e0e0e0"/><rect x="4" y="35" width="125" height="1" fill="#e8e8e8"/><rect x="7" y="41" width="12.5" height="3" fill="#e0e0e0"/><rect x="44" y="41" width="9" height="3" fill="#e0e0e0"/><rect x="76.5" y="41" width="10.5" height="3" fill="#e0e0e0"/><rect x="118" y="41" width="6" height="3" fill="#e0e0e0"/><rect x="4" y="50" width="125" height="1" fill="#e8e8e8"/><rect x="7" y="56" width="12.5" height="3" fill="#e0e0e0"/><rect x="44" y="56" width="9" height="3" fill="#e0e0e0"/><rect x="76.5" y="56" width="10.5" height="3" fill="#e0e0e0"/><rect x="118" y="56" width="6" height="3" fill="#e0e0e0"/><rect x="4" y="65" width="125" height="1" fill="#e8e8e8"/><rect x="7" y="71" width="12.5" height="3" fill="#e0e0e0"/><rect x="44" y="71" width="9" height="3" fill="#e0e0e0"/><rect x="76.5" y="71" width="10.5" height="3" fill="#e0e0e0"/><rect x="118" y="71" width="6" height="3" fill="#e0e0e0"/><rect x="4" y="80" width="125" height="1" fill="#e8e8e8"/><rect x="7" y="86" width="12.5" height="3" fill="#e0e0e0"/><rect x="44" y="86" width="9" height="3" fill="#e0e0e0"/><rect x="76.5" y="86" width="10.5" height="3" fill="#e0e0e0"/><rect x="118" y="86" width="6" height="3" fill="#e0e0e0"/></svg></div>
<div class="gear" style="left:80px;top:472px"><svg style="position:absolute;left:3px;top:3px" width="10" height="10" viewBox="0 0 10 10" fill="none" stroke="#f7f7f7" stroke-width="1"><path d="M5.00 0.15 L5.42 0.26 L5.79 0.54 L6.09 0.94 L6.33 1.36 L6.54 1.70 L6.78 1.93 L7.09 2.02 L7.49 2.03 L7.97 2.03 L8.47 2.09 L8.90 2.27 L9.20 2.57 L9.32 2.99 L9.25 3.45 L9.06 3.91 L8.82 4.33 L8.62 4.68 L8.55 5.00 L8.62 5.32 L8.82 5.67 L9.06 6.09 L9.25 6.55 L9.32 7.01 L9.20 7.42 L8.90 7.73 L8.47 7.91 L7.97 7.97 L7.49 7.97 L7.09 7.98 L6.78 8.07 L6.54 8.30 L6.33 8.64 L6.09 9.06 L5.79 9.46 L5.42 9.74 L5.00 9.85 L4.58 9.74 L4.21 9.46 L3.91 9.06 L3.67 8.64 L3.46 8.30 L3.22 8.07 L2.91 7.98 L2.51 7.97 L2.03 7.97 L1.53 7.91 L1.10 7.73 L0.80 7.43 L0.68 7.01 L0.75 6.55 L0.94 6.09 L1.18 5.67 L1.38 5.32 L1.45 5.00 L1.38 4.68 L1.18 4.33 L0.94 3.91 L0.75 3.45 L0.68 2.99 L0.80 2.58 L1.10 2.27 L1.53 2.09 L2.03 2.03 L2.51 2.03 L2.91 2.02 L3.23 1.93 L3.46 1.70 L3.67 1.36 L3.91 0.94 L4.21 0.54 L4.58 0.26 Z"/><circle cx="5" cy="5" r="1.600"/></svg></div>
<div class="lbl" style="right:574px;top:471px">边框</div>
<div class="radio on" style="left:140px;top:473px"></div>
<div class="txt blue" style="left:164px;top:471px">启用</div>
<div class="radio" style="left:310px;top:473px"></div>
<div class="txt" style="left:334px;top:471px">不启用</div>
<div class="thumb" style="left:140px;top:496px;height:100px"><svg width="130" height="98" viewBox="1 1 130 98"><rect x="4" y="5" width="125" height="15" fill="#f8f8f8"/><rect x="7" y="11" width="16" height="4" fill="#ebebeb"/><rect x="44" y="11" width="11" height="4" fill="#ebebeb"/><rect x="76.5" y="11" width="20" height="4" fill="#ebebeb"/><rect x="118" y="11" width="7" height="4" fill="#ebebeb"/><rect x="4" y="5" width="125" height="1" fill="#ebebeb"/><rect x="4" y="19" width="125" height="1" fill="#ebebeb"/><rect x="7" y="26.5" width="12.5" height="3" fill="#f0f0f0"/><rect x="44" y="26.5" width="9" height="3" fill="#f0f0f0"/><rect x="76.5" y="26.5" width="10.5" height="3" fill="#f0f0f0"/><rect x="118" y="26.5" width="6" height="3" fill="#f0f0f0"/><rect x="4" y="35" width="125" height="1" fill="#ebebeb"/><rect x="7" y="41.5" width="12.5" height="3" fill="#f0f0f0"/><rect x="44" y="41.5" width="9" height="3" fill="#f0f0f0"/><rect x="76.5" y="41.5" width="10.5" height="3" fill="#f0f0f0"/><rect x="118" y="41.5" width="6" height="3" fill="#f0f0f0"/><rect x="4" y="50" width="125" height="1" fill="#ebebeb"/><rect x="7" y="56.5" width="12.5" height="3" fill="#f0f0f0"/><rect x="44" y="56.5" width="9" height="3" fill="#f0f0f0"/><rect x="76.5" y="56.5" width="10.5" height="3" fill="#f0f0f0"/><rect x="118" y="56.5" width="6" height="3" fill="#f0f0f0"/><rect x="4" y="65" width="125" height="1" fill="#ebebeb"/><rect x="7" y="71.5" width="12.5" height="3" fill="#f0f0f0"/><rect x="44" y="71.5" width="9" height="3" fill="#f0f0f0"/><rect x="76.5" y="71.5" width="10.5" height="3" fill="#f0f0f0"/><rect x="118" y="71.5" width="6" height="3" fill="#f0f0f0"/><rect x="4" y="80" width="125" height="1" fill="#ebebeb"/><rect x="7" y="86.5" width="12.5" height="3" fill="#f0f0f0"/><rect x="44" y="86.5" width="9" height="3" fill="#f0f0f0"/><rect x="76.5" y="86.5" width="10.5" height="3" fill="#f0f0f0"/><rect x="118" y="86.5" width="6" height="3" fill="#f0f0f0"/><rect x="4.5" y="5.5" width="124" height="90" fill="none" stroke="#409eff" stroke-width="1"/></svg></div>
<div class="thumb" style="left:310px;top:496px;height:100px"><svg width="130" height="98" viewBox="1 1 130 98"><rect x="4" y="5" width="125" height="15" fill="#f8f8f8"/><rect x="7" y="11" width="16" height="4" fill="#ebebeb"/><rect x="44" y="11" width="11" height="4" fill="#ebebeb"/><rect x="76.5" y="11" width="20" height="4" fill="#ebebeb"/><rect x="118" y="11" width="7" height="4" fill="#ebebeb"/><rect x="4" y="5" width="125" height="1" fill="#ebebeb"/><rect x="4" y="19" width="125" height="1" fill="#ebebeb"/><rect x="7" y="26.5" width="12.5" height="3" fill="#f0f0f0"/><rect x="44" y="26.5" width="9" height="3" fill="#f0f0f0"/><rect x="76.5" y="26.5" width="10.5" height="3" fill="#f0f0f0"/><rect x="118" y="26.5" width="6" height="3" fill="#f0f0f0"/><rect x="4" y="35" width="125" height="1" fill="#ebebeb"/><rect x="7" y="41.5" width="12.5" height="3" fill="#f0f0f0"/><rect x="44" y="41.5" width="9" height="3" fill="#f0f0f0"/><rect x="76.5" y="41.5" width="10.5" height="3" fill="#f0f0f0"/><rect x="118" y="41.5" width="6" height="3" fill="#f0f0f0"/><rect x="4" y="50" width="125" height="1" fill="#ebebeb"/><rect x="7" y="56.5" width="12.5" height="3" fill="#f0f0f0"/><rect x="44" y="56.5" width="9" height="3" fill="#f0f0f0"/><rect x="76.5" y="56.5" width="10.5" height="3" fill="#f0f0f0"/><rect x="118" y="56.5" width="6" height="3" fill="#f0f0f0"/><rect x="4" y="65" width="125" height="1" fill="#ebebeb"/><rect x="7" y="71.5" width="12.5" height="3" fill="#f0f0f0"/><rect x="44" y="71.5" width="9" height="3" fill="#f0f0f0"/><rect x="76.5" y="71.5" width="10.5" height="3" fill="#f0f0f0"/><rect x="118" y="71.5" width="6" height="3" fill="#f0f0f0"/><rect x="4" y="80" width="125" height="1" fill="#ebebeb"/><rect x="7" y="86.5" width="12.5" height="3" fill="#f0f0f0"/><rect x="44" y="86.5" width="9" height="3" fill="#f0f0f0"/><rect x="76.5" y="86.5" width="10.5" height="3" fill="#f0f0f0"/><rect x="118" y="86.5" width="6" height="3" fill="#f0f0f0"/></svg></div>
<div class="red" style="left:51.59999999999991px;top:622.8px;width:410px;height:88px"></div>
<div class="lbl" style="right:574px;top:627px">行背景色</div>
<div class="radio" style="left:140px;top:631px"></div>
<div class="txt" style="left:164px;top:627px">无</div>
<div class="radio" style="left:208px;top:631px"></div>
<div class="txt" style="left:232px;top:627px">隔行背景色</div>
<div class="radio" style="left:332px;top:631px"></div>
<div class="txt" style="left:356px;top:627px">条件显示</div>
<div class="gear" style="left:80px;top:674px"><svg style="position:absolute;left:3px;top:3px" width="10" height="10" viewBox="0 0 10 10" fill="none" stroke="#f7f7f7" stroke-width="1"><path d="M5.00 0.15 L5.42 0.26 L5.79 0.54 L6.09 0.94 L6.33 1.36 L6.54 1.70 L6.78 1.93 L7.09 2.02 L7.49 2.03 L7.97 2.03 L8.47 2.09 L8.90 2.27 L9.20 2.57 L9.32 2.99 L9.25 3.45 L9.06 3.91 L8.82 4.33 L8.62 4.68 L8.55 5.00 L8.62 5.32 L8.82 5.67 L9.06 6.09 L9.25 6.55 L9.32 7.01 L9.20 7.42 L8.90 7.73 L8.47 7.91 L7.97 7.97 L7.49 7.97 L7.09 7.98 L6.78 8.07 L6.54 8.30 L6.33 8.64 L6.09 9.06 L5.79 9.46 L5.42 9.74 L5.00 9.85 L4.58 9.74 L4.21 9.46 L3.91 9.06 L3.67 8.64 L3.46 8.30 L3.22 8.07 L2.91 7.98 L2.51 7.97 L2.03 7.97 L1.53 7.91 L1.10 7.73 L0.80 7.43 L0.68 7.01 L0.75 6.55 L0.94 6.09 L1.18 5.67 L1.38 5.32 L1.45 5.00 L1.38 4.68 L1.18 4.33 L0.94 3.91 L0.75 3.45 L0.68 2.99 L0.80 2.58 L1.10 2.27 L1.53 2.09 L2.03 2.03 L2.51 2.03 L2.91 2.02 L3.23 1.93 L3.46 1.70 L3.67 1.36 L3.91 0.94 L4.21 0.54 L4.58 0.26 Z"/><circle cx="5" cy="5" r="1.600"/></svg></div>
<div class="lbl" style="right:574px;top:673px">行高</div>
<div class="abs" style="left:140px;top:669px;width:130px;height:28px;border:1px solid #dcdfe6;border-radius:4px;background:#fff;overflow:hidden"><div class="abs" style="left:0;top:0;width:29px;height:26px;background:#f5f7fa;border-right:1px solid #dcdfe6"></div><div class="abs" style="right:0;top:0;width:29px;height:26px;background:#f5f7fa;border-left:1px solid #dcdfe6"></div><div class="abs" style="left:10px;top:12.5px;width:9px;height:1px;background:#7d8087"></div><div class="abs" style="left:110px;top:12.5px;width:9px;height:1px;background:#7d8087"></div><div class="abs" style="left:114px;top:8.5px;width:1px;height:9px;background:#7d8087"></div><div class="abs" style="left:29px;top:0;width:70px;height:26px;line-height:29px;text-align:center;font-size:12px;color:#606266">40</div></div>
<div class="sec-bar" style="left:10px;top:715px"></div><div class="sec-t" style="left:24px;top:717px">风格设置</div><div class="sec-l" style="left:25px;top:744px;width:661px"></div>
<div class="gear" style="left:52px;top:770px"><svg style="position:absolute;left:3px;top:3px" width="10" height="10" viewBox="0 0 10 10" fill="none" stroke="#f7f7f7" stroke-width="1"><path d="M5.00 0.15 L5.42 0.26 L5.79 0.54 L6.09 0.94 L6.33 1.36 L6.54 1.70 L6.78 1.93 L7.09 2.02 L7.49 2.03 L7.97 2.03 L8.47 2.09 L8.90 2.27 L9.20 2.57 L9.32 2.99 L9.25 3.45 L9.06 3.91 L8.82 4.33 L8.62 4.68 L8.55 5.00 L8.62 5.32 L8.82 5.67 L9.06 6.09 L9.25 6.55 L9.32 7.01 L9.20 7.42 L8.90 7.73 L8.47 7.91 L7.97 7.97 L7.49 7.97 L7.09 7.98 L6.78 8.07 L6.54 8.30 L6.33 8.64 L6.09 9.06 L5.79 9.46 L5.42 9.74 L5.00 9.85 L4.58 9.74 L4.21 9.46 L3.91 9.06 L3.67 8.64 L3.46 8.30 L3.22 8.07 L2.91 7.98 L2.51 7.97 L2.03 7.97 L1.53 7.91 L1.10 7.73 L0.80 7.43 L0.68 7.01 L0.75 6.55 L0.94 6.09 L1.18 5.67 L1.38 5.32 L1.45 5.00 L1.38 4.68 L1.18 4.33 L0.94 3.91 L0.75 3.45 L0.68 2.99 L0.80 2.58 L1.10 2.27 L1.53 2.09 L2.03 2.03 L2.51 2.03 L2.91 2.02 L3.23 1.93 L3.46 1.70 L3.67 1.36 L3.91 0.94 L4.21 0.54 L4.58 0.26 Z"/><circle cx="5" cy="5" r="1.600"/></svg></div>
<div class="lbl" style="right:574px;top:769px">列宽拖动</div>
<div class="radio on" style="left:140px;top:772px"></div>
<div class="txt blue" style="left:164px;top:769px">可拖动</div>
<div class="radio" style="left:310px;top:772px"></div>
<div class="txt" style="left:334px;top:769px">不可拖动</div>
<div class="abs" style="left:0;top:788px;width:702px;height:75px;overflow:hidden">
<div class="thumb" style="left:140px;top:7px;height:100px"><svg width="130" height="98" viewBox="1 1 130 98"><rect x="4" y="5" width="125" height="15" fill="#f8f8f8"/><rect x="7" y="11" width="16" height="4" fill="#ebebeb"/><rect x="44" y="11" width="11" height="4" fill="#ebebeb"/><rect x="76.5" y="11" width="20" height="4" fill="#ebebeb"/><rect x="118" y="11" width="7" height="4" fill="#ebebeb"/><rect x="4" y="5" width="125" height="1" fill="#ebebeb"/><rect x="4" y="19" width="125" height="1" fill="#ebebeb"/><rect x="7" y="26.5" width="12.5" height="3" fill="#f0f0f0"/><rect x="44" y="26.5" width="9" height="3" fill="#f0f0f0"/><rect x="76.5" y="26.5" width="10.5" height="3" fill="#f0f0f0"/><rect x="118" y="26.5" width="6" height="3" fill="#f0f0f0"/><rect x="4" y="35" width="125" height="1" fill="#ebebeb"/><rect x="7" y="41.5" width="12.5" height="3" fill="#f0f0f0"/><rect x="44" y="41.5" width="9" height="3" fill="#f0f0f0"/><rect x="76.5" y="41.5" width="10.5" height="3" fill="#f0f0f0"/><rect x="118" y="41.5" width="6" height="3" fill="#f0f0f0"/><rect x="4" y="50" width="125" height="1" fill="#ebebeb"/><rect x="7" y="56.5" width="12.5" height="3" fill="#f0f0f0"/><rect x="44" y="56.5" width="9" height="3" fill="#f0f0f0"/><rect x="76.5" y="56.5" width="10.5" height="3" fill="#f0f0f0"/><rect x="118" y="56.5" width="6" height="3" fill="#f0f0f0"/><rect x="4" y="65" width="125" height="1" fill="#ebebeb"/><rect x="7" y="71.5" width="12.5" height="3" fill="#f0f0f0"/><rect x="44" y="71.5" width="9" height="3" fill="#f0f0f0"/><rect x="76.5" y="71.5" width="10.5" height="3" fill="#f0f0f0"/><rect x="118" y="71.5" width="6" height="3" fill="#f0f0f0"/><rect x="4" y="80" width="125" height="1" fill="#ebebeb"/><rect x="7" y="86.5" width="12.5" height="3" fill="#f0f0f0"/><rect x="44" y="86.5" width="9" height="3" fill="#f0f0f0"/><rect x="76.5" y="86.5" width="10.5" height="3" fill="#f0f0f0"/><rect x="118" y="86.5" width="6" height="3" fill="#f0f0f0"/><rect x="33" y="5" width="1" height="95" fill="#409eff"/><path d="M29 15.5 H38 M30.5 14 L29 15.5 L30.5 17 M36.500 14 L38 15.500 L36.500 17" stroke="#2b3fe0" stroke-width="1.2" fill="none"/><path d="M35 19 v5 h4 v-3 l-2 -.6 v-1.4 z" fill="#fff" stroke="#9a8fd8" stroke-width=".8"/><rect x="35" y="24" width="4.500" height="2.500" fill="#3e6be8"/></svg></div>
<div class="thumb" style="left:310px;top:7px;height:100px"><svg width="130" height="98" viewBox="1 1 130 98"><rect x="4" y="5" width="125" height="15" fill="#f8f8f8"/><rect x="7" y="11" width="16" height="4" fill="#ebebeb"/><rect x="44" y="11" width="11" height="4" fill="#ebebeb"/><rect x="76.5" y="11" width="20" height="4" fill="#ebebeb"/><rect x="118" y="11" width="7" height="4" fill="#ebebeb"/><rect x="4" y="5" width="125" height="1" fill="#ebebeb"/><rect x="4" y="19" width="125" height="1" fill="#ebebeb"/><rect x="7" y="26.5" width="12.5" height="3" fill="#f0f0f0"/><rect x="44" y="26.5" width="9" height="3" fill="#f0f0f0"/><rect x="76.5" y="26.5" width="10.5" height="3" fill="#f0f0f0"/><rect x="118" y="26.5" width="6" height="3" fill="#f0f0f0"/><rect x="4" y="35" width="125" height="1" fill="#ebebeb"/><rect x="7" y="41.5" width="12.5" height="3" fill="#f0f0f0"/><rect x="44" y="41.5" width="9" height="3" fill="#f0f0f0"/><rect x="76.5" y="41.5" width="10.5" height="3" fill="#f0f0f0"/><rect x="118" y="41.5" width="6" height="3" fill="#f0f0f0"/><rect x="4" y="50" width="125" height="1" fill="#ebebeb"/><rect x="7" y="56.5" width="12.5" height="3" fill="#f0f0f0"/><rect x="44" y="56.5" width="9" height="3" fill="#f0f0f0"/><rect x="76.5" y="56.5" width="10.5" height="3" fill="#f0f0f0"/><rect x="118" y="56.5" width="6" height="3" fill="#f0f0f0"/><rect x="4" y="65" width="125" height="1" fill="#ebebeb"/><rect x="7" y="71.5" width="12.5" height="3" fill="#f0f0f0"/><rect x="44" y="71.5" width="9" height="3" fill="#f0f0f0"/><rect x="76.5" y="71.5" width="10.5" height="3" fill="#f0f0f0"/><rect x="118" y="71.5" width="6" height="3" fill="#f0f0f0"/><rect x="4" y="80" width="125" height="1" fill="#ebebeb"/><rect x="7" y="86.5" width="12.5" height="3" fill="#f0f0f0"/><rect x="44" y="86.5" width="9" height="3" fill="#f0f0f0"/><rect x="76.5" y="86.5" width="10.5" height="3" fill="#f0f0f0"/><rect x="118" y="86.5" width="6" height="3" fill="#f0f0f0"/><rect x="33" y="5" width="1" height="95" fill="#dcdcdc"/></svg></div>
</div>
</div>
</div>
<div class="abs" id="edge"></div>
</body></html>
